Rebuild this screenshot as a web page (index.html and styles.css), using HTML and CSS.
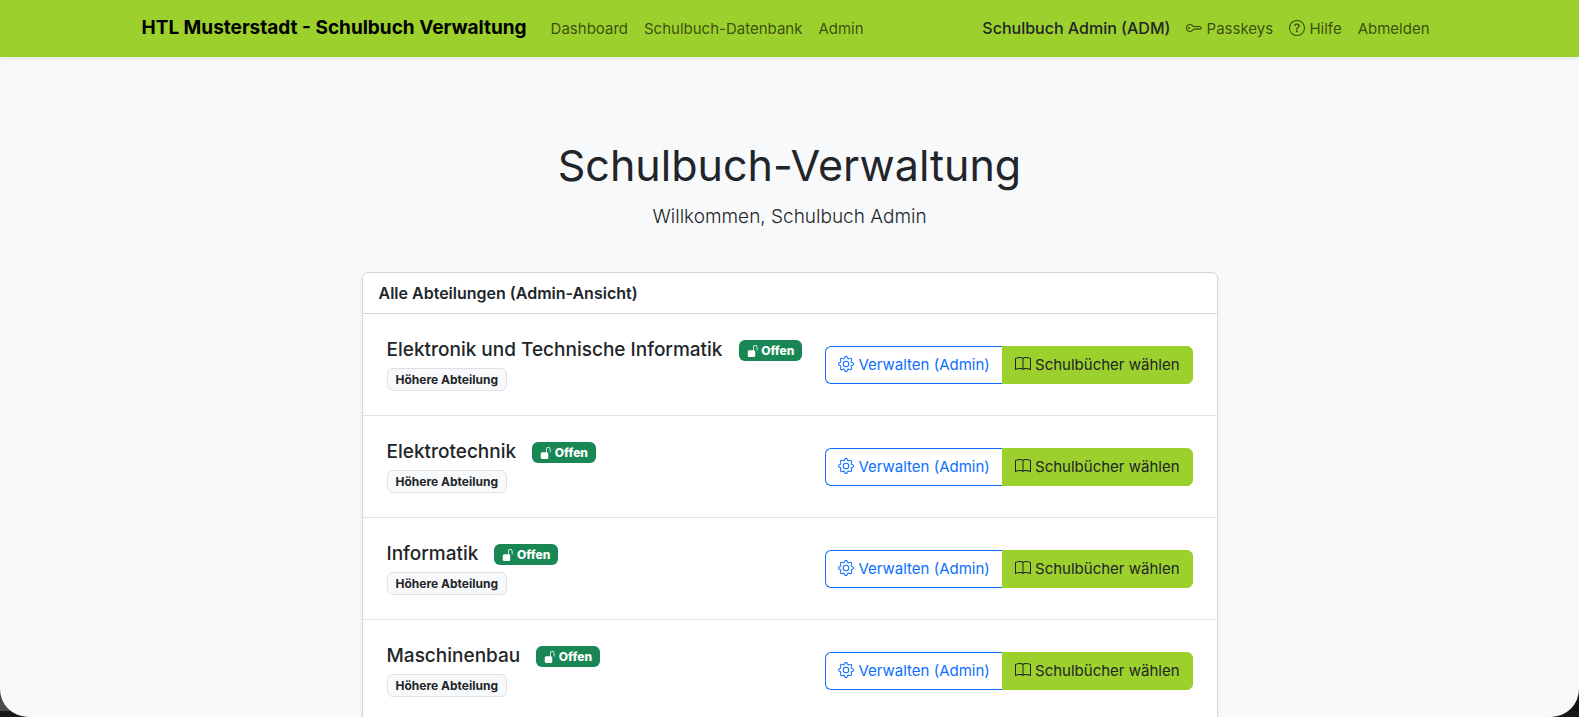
FILE: index.html
```
<!DOCTYPE html>
<html lang="de">
<head>
    <meta charset="UTF-8">
    <meta name="viewport" content="width=device-width, initial-scale=1.0">
    <title>Schulbuch-Verwaltung</title>
    <link rel="stylesheet" href="styles.css">
</head>
<body>
    <!-- Icons -->
    <svg class="icon-defs" aria-hidden="true">
        <symbol id="icon-key" viewBox="0 0 16 16">
            <path d="M0 8a4 4 0 0 1 7.465-2H14a.5.5 0 0 1 .354.146l1.5 1.5a.5.5 0 0 1 0 .708l-1.5 1.5a.5.5 0 0 1-.708 0L13 9.207l-.646.647a.5.5 0 0 1-.708 0L11 9.207l-.646.647a.5.5 0 0 1-.708 0L9 9.207l-.646.647A.5.5 0 0 1 8 10h-.535A4 4 0 0 1 0 8m4-3a3 3 0 1 0 2.712 4.285A.5.5 0 0 1 7.163 9h.63l.853-.854a.5.5 0 0 1 .708 0l.646.647.646-.647a.5.5 0 0 1 .708 0l.646.647.646-.647a.5.5 0 0 1 .708 0l.646.647.793-.793-1-1h-6.63a.5.5 0 0 1-.451-.285A3 3 0 0 0 4 5"/>
            <path d="M4 8a1 1 0 1 1-2 0 1 1 0 0 1 2 0"/>
        </symbol>
        <symbol id="icon-help" viewBox="0 0 16 16">
            <path d="M8 15A7 7 0 1 1 8 1a7 7 0 0 1 0 14m0 1A8 8 0 1 0 8 0a8 8 0 0 0 0 16"/>
            <path d="M5.255 5.786a.237.237 0 0 0 .241.247h.825c.138 0 .248-.113.266-.25.09-.656.54-1.134 1.342-1.134.686 0 1.314.343 1.314 1.168 0 .635-.374.927-.965 1.371-.673.489-1.206 1.06-1.168 1.987l.003.217a.25.25 0 0 0 .25.246h.811a.25.25 0 0 0 .25-.25v-.105c0-.718.273-.927 1.01-1.486.609-.463 1.244-.977 1.244-2.056 0-1.511-1.276-2.241-2.673-2.241-1.267 0-2.655.59-2.75 2.286m1.557 5.763c0 .533.425.927 1.01.927.609 0 1.028-.394 1.028-.927 0-.552-.42-.94-1.029-.94-.584 0-1.009.388-1.009.94"/>
        </symbol>
        <symbol id="icon-gear" viewBox="0 0 16 16">
            <path d="M8 4.754a3.246 3.246 0 1 0 0 6.492 3.246 3.246 0 0 0 0-6.492M5.754 8a2.246 2.246 0 1 1 4.492 0 2.246 2.246 0 0 1-4.492 0"/>
            <path d="M9.796 1.343c-.527-1.79-3.065-1.79-3.592 0l-.094.319a.873.873 0 0 1-1.255.52l-.292-.16c-1.64-.892-3.433.902-2.54 2.541l.159.292a.873.873 0 0 1-.52 1.255l-.319.094c-1.79.527-1.79 3.065 0 3.592l.319.094a.873.873 0 0 1 .52 1.255l-.16.292c-.892 1.64.901 3.434 2.541 2.54l.292-.159a.873.873 0 0 1 1.255.52l.094.319c.527 1.79 3.065 1.79 3.592 0l.094-.319a.873.873 0 0 1 1.255-.52l.292.16c1.64.893 3.434-.902 2.54-2.541l-.159-.292a.873.873 0 0 1 .52-1.255l.319-.094c1.79-.527 1.79-3.065 0-3.592l-.319-.094a.873.873 0 0 1-.52-1.255l.16-.292c.893-1.64-.902-3.433-2.541-2.54l-.292.159a.873.873 0 0 1-1.255-.52zm-2.633.283c.246-.835 1.428-.835 1.674 0l.094.319a1.873 1.873 0 0 0 2.693 1.115l.291-.16c.764-.415 1.6.42 1.184 1.185l-.159.292a1.873 1.873 0 0 0 1.116 2.692l.318.094c.835.246.835 1.428 0 1.674l-.319.094a1.873 1.873 0 0 0-1.115 2.693l.16.291c.415.764-.42 1.6-1.185 1.184l-.291-.159a1.873 1.873 0 0 0-2.693 1.116l-.094.318c-.246.835-1.428.835-1.674 0l-.094-.319a1.873 1.873 0 0 0-2.692-1.115l-.292.16c-.764.415-1.6-.42-1.184-1.185l.159-.291A1.873 1.873 0 0 0 1.945 8.93l-.319-.094c-.835-.246-.835-1.428 0-1.674l.319-.094A1.873 1.873 0 0 0 3.06 4.377l-.16-.292c-.415-.764.42-1.6 1.185-1.184l.292.159a1.873 1.873 0 0 0 2.692-1.115z"/>
        </symbol>
        <symbol id="icon-book" viewBox="0 0 16 16">
            <path d="M1 2.828c.885-.37 2.154-.769 3.388-.893 1.33-.134 2.458.063 3.112.752v9.746c-.935-.53-2.12-.603-3.213-.493-1.18.12-2.37.461-3.287.811zm7.5-.141c.654-.689 1.782-.886 3.112-.752 1.234.124 2.503.523 3.388.893v9.923c-.918-.35-2.107-.692-3.287-.81-1.094-.111-2.278-.039-3.213.492zM8 1.783C7.015.936 5.587.81 4.287.94c-1.514.153-3.042.672-3.994 1.105A.5.5 0 0 0 0 2.5v11a.5.5 0 0 0 .707.455c.882-.4 2.303-.881 3.68-1.02 1.409-.142 2.59.087 3.223.877a.5.5 0 0 0 .78 0c.633-.79 1.814-1.019 3.222-.877 1.378.139 2.8.62 3.681 1.02A.5.5 0 0 0 16 13.5v-11a.5.5 0 0 0-.293-.455c-.952-.433-2.48-.952-3.994-1.105C10.413.809 8.985.936 8 1.783"/>
        </symbol>
        <symbol id="icon-unlock" viewBox="0 0 16 16">
            <path d="M11 1a2 2 0 0 0-2 2v4a2 2 0 0 1 2 2v5a2 2 0 0 1-2 2H3a2 2 0 0 1-2-2V9a2 2 0 0 1 2-2h5V3a3 3 0 0 1 6 0v4a.5.5 0 0 1-1 0V3a2 2 0 0 0-2-2"/>
        </symbol>
    </svg>

    <div class="page">
        <nav class="navbar">
            <div class="container">
                <a class="brand" href="#">HTL Musterstadt - Schulbuch Verwaltung</a>
                <div class="nav-links">
                    <a href="#dashboard">Dashboard</a>
                    <a href="#datenbank">Schulbuch-Datenbank</a>
                    <a href="#admin">Admin</a>
                </div>
                <div class="nav-links nav-user">
                    <span class="user-name">Schulbuch Admin (ADM)</span>
                    <a href="#passkeys"><svg class="icon"><use href="#icon-key"/></svg> Passkeys</a>
                    <a href="#hilfe"><svg class="icon"><use href="#icon-help"/></svg> Hilfe</a>
                    <a href="#abmelden">Abmelden</a>
                </div>
            </div>
        </nav>

        <main>
            <header class="intro">
                <h1>Schulbuch-Verwaltung</h1>
                <p>Willkommen, Schulbuch Admin</p>
            </header>

            <section class="card">
                <h2 class="card-header">Alle Abteilungen (Admin-Ansicht)</h2>
                <ul class="departments">
                    <li class="department">
                        <div>
                            <div class="title-row">
                                <h3>Elektronik und Technische Informatik</h3>
                                <span class="badge badge-open"><svg class="icon"><use href="#icon-unlock"/></svg> Offen</span>
                            </div>
                            <span class="badge badge-type">Höhere Abteilung</span>
                        </div>
                        <div class="btn-group">
                            <a class="btn btn-outline" href="#verwalten-1"><svg class="icon"><use href="#icon-gear"/></svg> Verwalten (Admin)</a>
                            <a class="btn btn-green" href="#waehlen-1"><svg class="icon"><use href="#icon-book"/></svg> Schulbücher wählen</a>
                        </div>
                    </li>
                    <li class="department">
                        <div>
                            <div class="title-row">
                                <h3>Elektrotechnik</h3>
                                <span class="badge badge-open"><svg class="icon"><use href="#icon-unlock"/></svg> Offen</span>
                            </div>
                            <span class="badge badge-type">Höhere Abteilung</span>
                        </div>
                        <div class="btn-group">
                            <a class="btn btn-outline" href="#verwalten-2"><svg class="icon"><use href="#icon-gear"/></svg> Verwalten (Admin)</a>
                            <a class="btn btn-green" href="#waehlen-2"><svg class="icon"><use href="#icon-book"/></svg> Schulbücher wählen</a>
                        </div>
                    </li>
                    <li class="department">
                        <div>
                            <div class="title-row">
                                <h3>Informatik</h3>
                                <span class="badge badge-open"><svg class="icon"><use href="#icon-unlock"/></svg> Offen</span>
                            </div>
                            <span class="badge badge-type">Höhere Abteilung</span>
                        </div>
                        <div class="btn-group">
                            <a class="btn btn-outline" href="#verwalten-3"><svg class="icon"><use href="#icon-gear"/></svg> Verwalten (Admin)</a>
                            <a class="btn btn-green" href="#waehlen-3"><svg class="icon"><use href="#icon-book"/></svg> Schulbücher wählen</a>
                        </div>
                    </li>
                    <li class="department">
                        <div>
                            <div class="title-row">
                                <h3>Maschinenbau</h3>
                                <span class="badge badge-open"><svg class="icon"><use href="#icon-unlock"/></svg> Offen</span>
                            </div>
                            <span class="badge badge-type">Höhere Abteilung</span>
                        </div>
                        <div class="btn-group">
                            <a class="btn btn-outline" href="#verwalten-4"><svg class="icon"><use href="#icon-gear"/></svg> Verwalten (Admin)</a>
                            <a class="btn btn-green" href="#waehlen-4"><svg class="icon"><use href="#icon-book"/></svg> Schulbücher wählen</a>
                        </div>
                    </li>
                </ul>
            </section>
        </main>
    </div>
</body>
</html>
```
FILE: styles.css
```
* {
    box-sizing: border-box;
}

html {
    background: #101214;
}

body {
    margin: 0;
    font-family: Inter, "Liberation Sans", sans-serif;
    font-size: 15px;
    line-height: 24px;
    color: #212529;
    background:
        linear-gradient(to top, #181818 6px, transparent 6px),
        linear-gradient(to right, #4a4a4a 50%, #101214 50%);
}

a {
    text-decoration: none;
}

.icon-defs {
    display: none;
}

.icon {
    width: 16px;
    height: 16px;
    fill: currentColor;
    vertical-align: -2px;
}

/* scrolling page with rounded bottom corners */
.page {
    height: 100vh;
    overflow-y: auto;
    scrollbar-width: none;
    background-color: #f8f9fb;
    border-radius: 0 0 28px 28px;
}

.navbar {
    background-color: #9cd02c;
    padding: 8px 0;
    box-shadow: 0 2px 4px rgba(0, 0, 0, 0.075);
}

.container {
    display: flex;
    align-items: baseline;
    max-width: 1320px;
    margin: 0 auto;
    padding: 0 12px;
}

.brand {
    margin-right: 16px;
    font-size: 19px;
    font-weight: 700;
    color: #000;
}

.nav-links {
    display: flex;
    align-items: baseline;
    white-space: nowrap;
}

.nav-links a,
.user-name {
    padding: 8px;
}

.nav-links a {
    color: rgba(0, 0, 0, 0.65);
}

.nav-links a:hover {
    color: #000;
}

.nav-user {
    margin-left: auto;
}

.user-name {
    font-size: 16px;
    font-weight: 500;
}

main {
    max-width: 880px;
    margin: 0 auto;
    padding: 80px 12px 48px;
}

.intro {
    margin-bottom: 40px;
    text-align: center;
}

.intro h1 {
    margin: 0 0 8px;
    font-size: 43px;
    font-weight: 400;
    line-height: 57px;
}

.intro p {
    margin: 0;
    font-size: 19px;
    font-weight: 300;
    line-height: 30px;
}

.card {
    background-color: #fff;
    border: 1px solid #d6d7d8;
    border-radius: 6px;
    box-shadow: 0 2px 4px rgba(0, 0, 0, 0.075);
}

.card-header {
    margin: 0;
    padding: 8px 16px;
    font-size: 16px;
    font-weight: 600;
    border-bottom: 1px solid #d6d7d8;
}

.departments {
    margin: 0;
    padding: 0;
    list-style: none;
}

.department {
    display: flex;
    justify-content: space-between;
    align-items: center;
    padding: 24px;
    border-bottom: 1px solid #dee2e6;
}

.department:last-child {
    border-bottom: none;
}

.title-row {
    display: flex;
    align-items: center;
    gap: 16px;
    margin-bottom: 6px;
}

.title-row h3 {
    margin: 0;
    font-size: 19px;
    font-weight: 500;
    line-height: 24px;
}

.badge {
    display: block;
    width: fit-content;
    padding: 4px 8px;
    font-size: 12px;
    font-weight: 700;
    line-height: 13px;
    border-radius: 6px;
    white-space: nowrap;
}

.badge .icon {
    width: 12px;
    height: 12px;
}

.badge-open {
    font-weight: 800;
    color: #fff;
    background-color: #198754;
}

.badge-type {
    background-color: #f8f9fa;
    border: 1px solid #dee2e6;
}

.btn-group {
    display: flex;
    flex-shrink: 0;
}

.btn {
    padding: 6px 12px;
    border: 1px solid transparent;
    white-space: nowrap;
}

.btn-outline {
    color: #0d6efd;
    border-color: #0d6efd;
    border-right: none;
    border-radius: 6px 0 0 6px;
}

.btn-outline:hover {
    color: #fff;
    background-color: #0d6efd;
}

.btn-green {
    color: #212529;
    background-color: #9cd02c;
    border-color: #9cd02c;
    border-radius: 0 6px 6px 0;
}
```
